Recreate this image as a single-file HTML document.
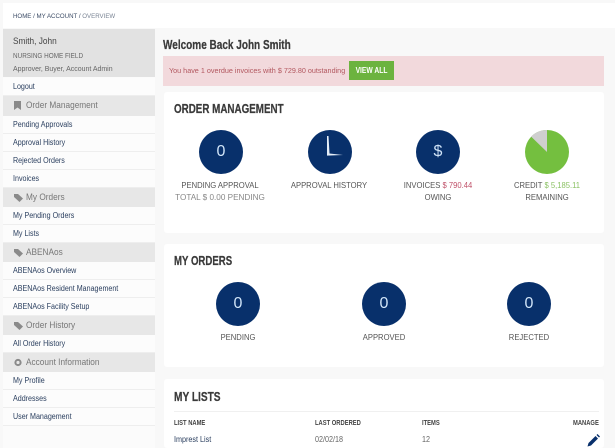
<!DOCTYPE html>
<html><head><meta charset="utf-8"><style>
html,body{margin:0;padding:0}
body{width:615px;height:448px;overflow:hidden;background:#f8f8f8;position:relative;font-family:"Liberation Sans",sans-serif;color:#444}
div{position:absolute;white-space:nowrap}
.o{transform-origin:0 0}
.r{left:3px;width:152px;height:17px;background:#fcfcfc;border-bottom:1px solid #eee}
.r span{position:absolute;left:10px;top:3px;font-size:8px;line-height:12px;color:#2c4060;white-space:nowrap;transform-origin:0 0;transform:scaleX(.89)}
.h{left:3px;width:152px;height:19px;background:#e7e7e7}
.h span{position:absolute;left:22.5px;top:3px;font-size:9.5px;line-height:14px;color:#777;white-space:nowrap;transform-origin:0 0;transform:scaleX(.87)}
.h svg{position:absolute;left:11px;top:5px}
.p{background:#fff;left:164px;width:440px;border-radius:3px}
.t{font-weight:bold;color:#3a3a3a;transform-origin:0 0;transform:scaleX(.77);-webkit-text-stroke:.25px #3a3a3a}
.c{width:44px;height:44px;border-radius:50%;background:#08306b;color:#cfe3f7;text-align:center;font-size:16px;line-height:44px}
.l{width:150px;text-align:center;font-size:8.5px;line-height:12px;color:#555;transform:scaleX(.9)}
.th{font-size:7px;font-weight:bold;color:#444;line-height:10px;transform-origin:0 0;transform:scaleX(.83)}
.td{font-size:8px;color:#666;line-height:10px;transform-origin:0 0;transform:scaleX(.9)}
</style></head><body>
<div style="left:3px;top:3px;width:612px;height:25px;background:#fff"></div>
<div class="o" style="left:13px;top:12px;font-size:6.6px;line-height:10px;color:#3c4c66;transform:scaleX(.93)">HOME / MY ACCOUNT / <span style="color:#7a8494">OVERVIEW</span></div>
<div style="left:3px;top:29px;width:152px;height:419px;background:#fbfbfb"></div>
<div style="left:3px;top:29px;width:152px;height:48px;background:#e2e2e2"></div>
<div class="o" style="left:13px;top:35px;font-size:9.2px;line-height:12px;color:#444;transform:scaleX(.9)">Smith, John</div>
<div class="o" style="left:13px;top:52px;font-size:7px;line-height:10px;color:#666;transform:scaleX(.91)">NURSING HOME FIELD</div>
<div class="o" style="left:13px;top:64px;font-size:7.2px;line-height:10px;color:#666;transform:scaleX(.97)">Approver, Buyer, Account Admin</div>
<div class="r" style="top:78px"><span>Logout</span></div>
<div class="h" style="top:96px;height:20px"><svg width="7" height="9" viewBox="0 0 7 9"><path d="M0 0H7V9L3.5 6.5 0 9Z" fill="#8a8a8a"/></svg><span>Order Management</span></div>
<div class="r" style="top:116px"><span>Pending Approvals</span></div>
<div class="r" style="top:134px"><span>Approval History</span></div>
<div class="r" style="top:152px"><span>Rejected Orders</span></div>
<div class="r" style="top:170px"><span>Invoices</span></div>
<div class="h" style="top:188px"><svg width="9" height="9" viewBox="0 0 9 9"><path d="M0 1H4L9 5.5 5.5 9 0 4Z" fill="#8a8a8a"/></svg><span>My Orders</span></div>
<div class="r" style="top:207px"><span>My Pending Orders</span></div>
<div class="r" style="top:225px"><span>My Lists</span></div>
<div class="h" style="top:243px"><svg width="9" height="9" viewBox="0 0 9 9"><path d="M0 1H4L9 5.5 5.5 9 0 4Z" fill="#8a8a8a"/></svg><span>ABENAos</span></div>
<div class="r" style="top:262px"><span>ABENAos Overview</span></div>
<div class="r" style="top:280px"><span>ABENAos Resident Management</span></div>
<div class="r" style="top:298px"><span>ABENAos Facility Setup</span></div>
<div class="h" style="top:316px"><svg width="9" height="9" viewBox="0 0 9 9"><path d="M0 1H4L9 5.5 5.5 9 0 4Z" fill="#8a8a8a"/></svg><span>Order History</span></div>
<div class="r" style="top:335px"><span>All Order History</span></div>
<div class="h" style="top:353px"><svg width="8" height="9" viewBox="0 0 8 9"><circle cx="4" cy="4.5" r="2.6" fill="none" stroke="#8a8a8a" stroke-width="2"/></svg><span>Account Information</span></div>
<div class="r" style="top:372px"><span>My Profile</span></div>
<div class="r" style="top:390px"><span>Addresses</span></div>
<div class="r" style="top:408px"><span>User Management</span></div>

<div class="t" style="left:163px;top:37px;font-size:13px;line-height:16px">Welcome Back John Smith</div>
<div style="left:163px;top:56px;width:441px;height:30px;background:#f2d9dc"></div>
<div class="o" style="left:169px;top:66px;font-size:7.6px;line-height:10px;color:#b2575f;transform:scaleX(.95)">You have 1 overdue invoices with $ 729.80 outstanding</div>
<div style="left:349px;top:61px;width:45px;height:19px;background:#6cb33f"></div>
<div style="left:349px;top:61px;width:45px;height:19px;color:#fff;font-size:8px;font-weight:bold;text-align:center;line-height:19px;transform:scaleX(.84)">VIEW ALL</div>

<div class="p" style="top:92px;height:141px"></div>
<div class="t" style="left:174px;top:101px;font-size:13px;line-height:16px;transform:scaleX(.755)">ORDER MANAGEMENT</div>
<div class="c" style="left:199px;top:130px">0</div>
<div class="c" style="left:308px;top:130px"></div>
<svg style="position:absolute;left:308px;top:130px" width="44" height="44"><path d="M19 6H20.5L21.5 23.5 35 25 19 25.6Z" fill="#e4edf7"/></svg>
<div class="c" style="left:416px;top:130px">$</div>
<svg style="position:absolute;left:525px;top:130px" width="44" height="44"><circle cx="22" cy="22" r="22" fill="#74bf3f"/><path d="M22 22L6 6.5A22 22 0 0 1 22 0Z" fill="#cfcfcf"/></svg>
<div class="l" style="left:145px;top:179px">PENDING APPROVAL</div>
<div class="l" style="left:145px;top:191px;color:#888;transform:scaleX(.96)">TOTAL $ 0.00 PENDING</div>
<div class="l" style="left:254px;top:179px">APPROVAL HISTORY</div>
<div class="l" style="left:363px;top:179px">INVOICES <span style="color:#c0526a">$ 790.44</span></div>
<div class="l" style="left:363px;top:191px">OWING</div>
<div class="l" style="left:472px;top:179px">CREDIT <span style="color:#8cc265">$ 5,185.11</span></div>
<div class="l" style="left:472px;top:191px">REMAINING</div>

<div class="p" style="top:244px;height:123px"></div>
<div class="t" style="left:174px;top:253px;font-size:12.5px;line-height:16px">MY ORDERS</div>
<div class="c" style="left:216px;top:282px">0</div>
<div class="c" style="left:362px;top:282px">0</div>
<div class="c" style="left:507px;top:282px">0</div>
<div class="l" style="left:163px;top:331px">PENDING</div>
<div class="l" style="left:309px;top:331px">APPROVED</div>
<div class="l" style="left:454px;top:331px">REJECTED</div>

<div class="p" style="top:379px;height:69px"></div>
<div class="t" style="left:174px;top:389px;font-size:13px;line-height:16px;transform:scaleX(.78)">MY LISTS</div>
<div style="left:174px;top:411px;width:425px;height:1px;background:#f0f0f0"></div>
<div class="th" style="left:174px;top:419px">LIST NAME</div>
<div class="th" style="left:315px;top:419px">LAST ORDERED</div>
<div class="th" style="left:422px;top:419px">ITEMS</div>
<div class="th" style="left:573px;top:419px">MANAGE</div>
<div class="td" style="left:174px;top:435px;color:#2c4060">Imprest List</div>
<div class="td" style="left:315px;top:435px">02/02/18</div>
<div class="td" style="left:422px;top:435px">12</div>
<svg style="position:absolute;left:587px;top:434px" width="13" height="13" viewBox="0 0 13 13"><path d="M0.5 12.5L1.5 9 8.5 2 11 4.5 4 11.5ZM9.5 1L10.5 0 13 2.5 12 3.5Z" fill="#08306b"/></svg>
</body></html>
